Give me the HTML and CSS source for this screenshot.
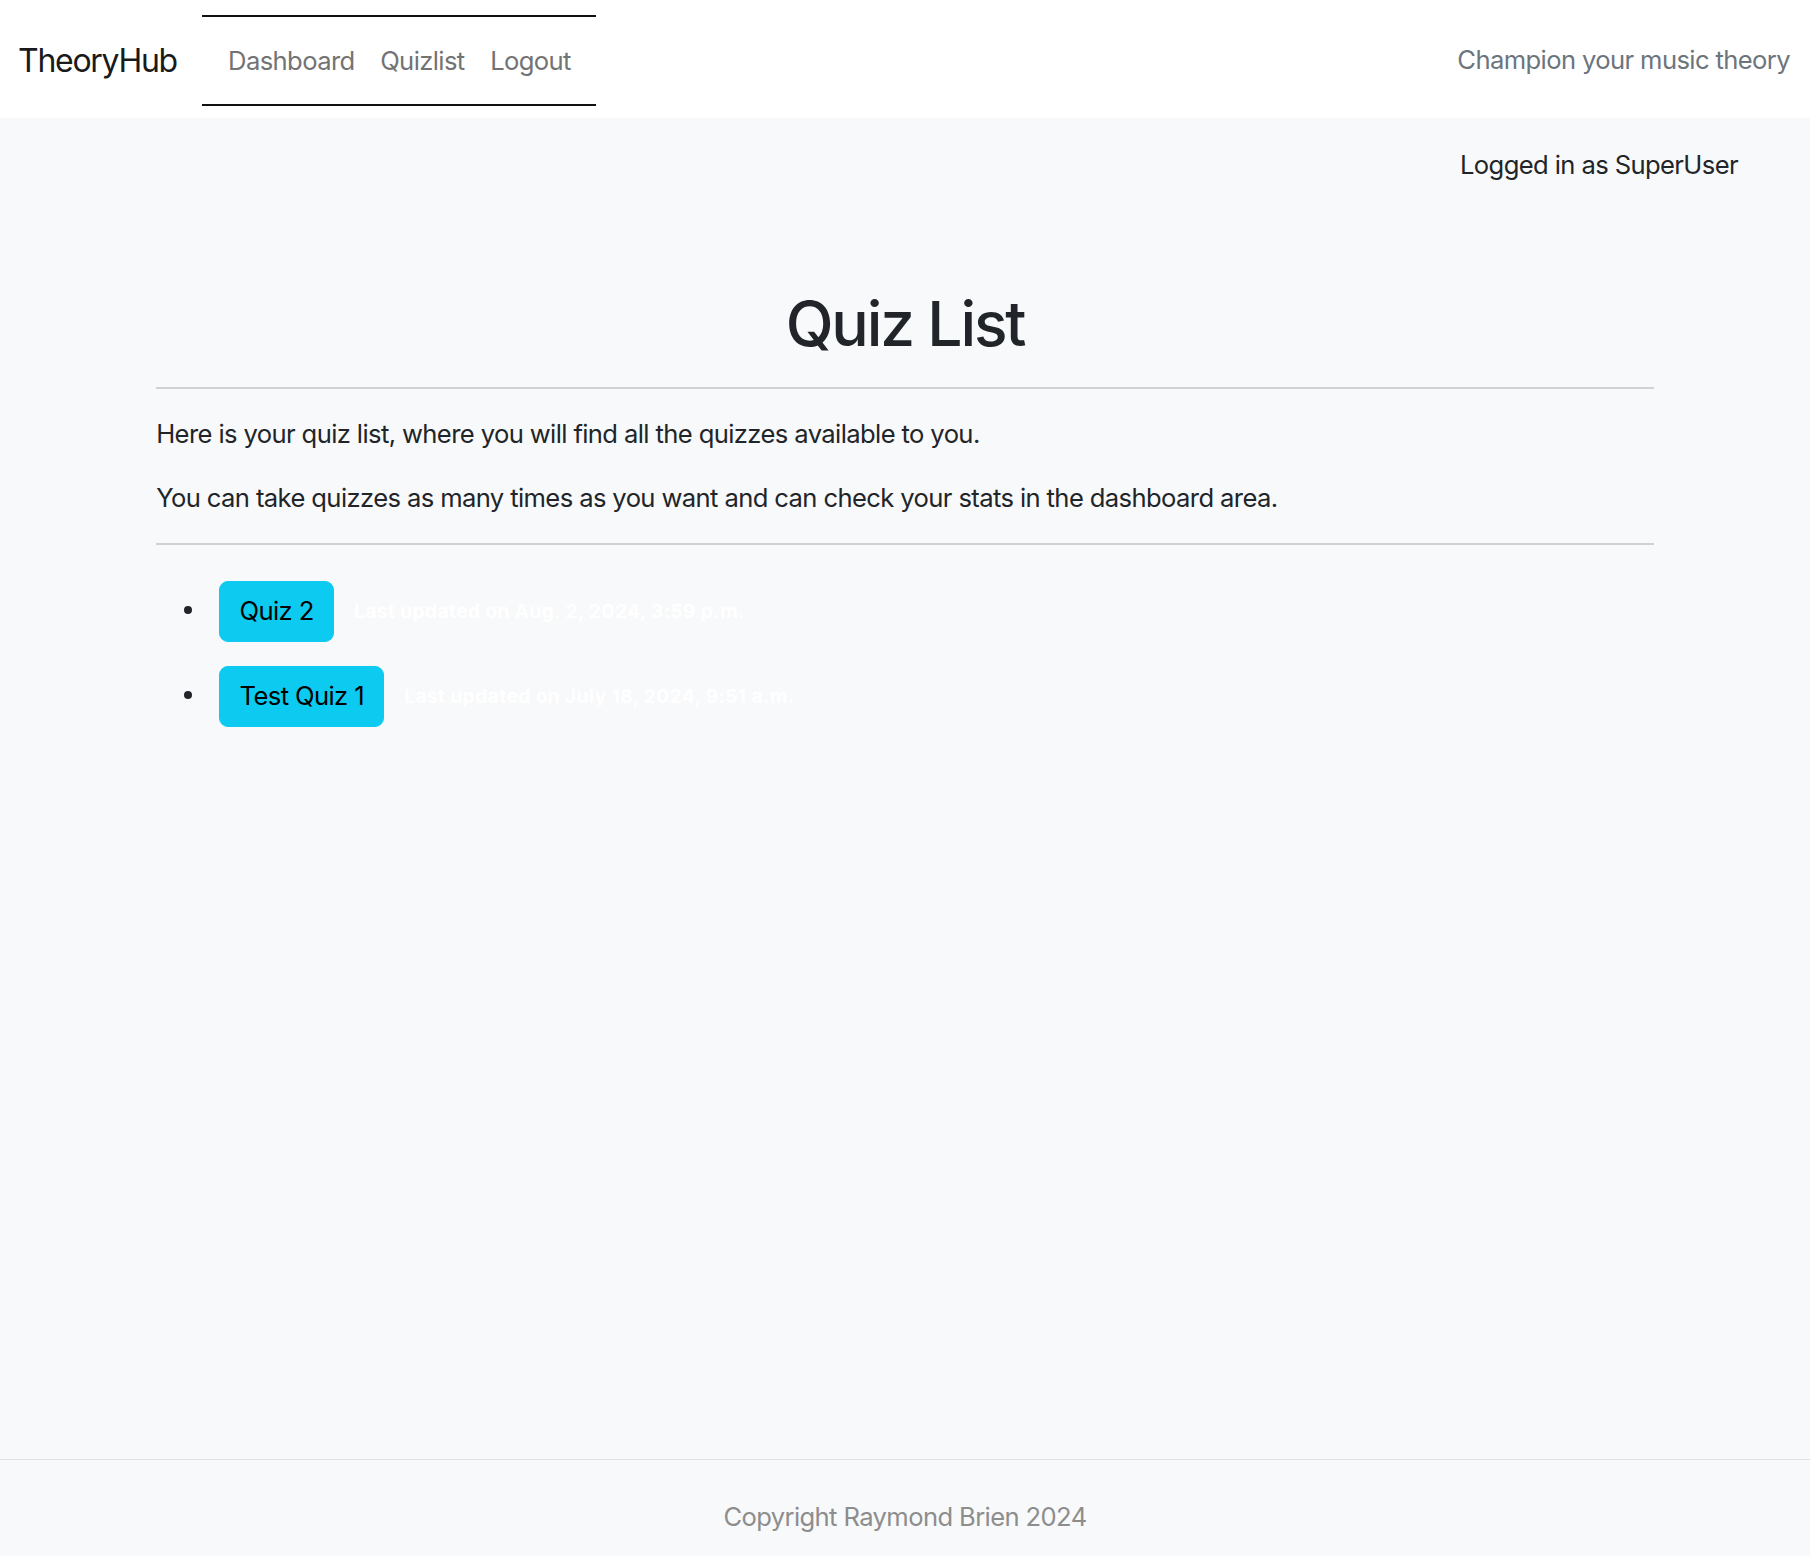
FILE: index.html
```html
<!DOCTYPE html>
<html lang="en">
<head>
<meta charset="utf-8">
<title>TheoryHub - Quiz List</title>
<link rel="stylesheet" href="styles.css">
</head>
<body>
<header class="navbar">
  <a class="brand" href="#">TheoryHub</a>
  <ul class="nav">
    <li><a class="nav-link" href="#">Dashboard</a></li>
    <li><a class="nav-link" href="#">Quizlist</a></li>
    <li><a class="nav-link" href="#">Logout</a></li>
  </ul>
  <span class="tagline">Champion your music theory</span>
</header>
<main class="main">
  <div class="userbar">Logged in as SuperUser</div>
  <div class="container">
    <h1 class="title">Quiz List</h1>
    <hr class="rule">
    <p class="text">Here is your quiz list, where you will find all the quizzes available to you.</p>
    <p class="text">You can take quizzes as many times as you want and can check your stats in the dashboard area.</p>
    <hr class="rule">
    <ul class="quiz-list">
      <li class="quiz-item"><a class="btn" href="#">Quiz 2</a><span class="updated">Last updated on Aug. 2, 2024, 3:59 p.m.</span></li>
      <li class="quiz-item"><a class="btn" href="#">Test Quiz 1</a><span class="updated">Last updated on July 18, 2024, 9:51 a.m.</span></li>
    </ul>
  </div>
</main>
<footer class="footer">Copyright Raymond Brien 2024</footer>
</body>
</html>
```
FILE: styles.css
```css
* { box-sizing: border-box; }

body {
  margin: 0;
  font-family: Inter, "Liberation Sans", sans-serif;
  font-size: 25.6px;
  line-height: 1.5;
  letter-spacing: -0.024em;
  color: #212529;
  background: #f8f9fa;
}

a { text-decoration: none; }

.navbar {
  display: flex;
  align-items: center;
  background: #fff;
  padding: 15px 20px 12px 18px;
}

.brand {
  font-size: 32px;
  line-height: 48px;
  letter-spacing: -0.04em;
  color: #1a1a1a;
  margin-right: 25.6px;
}

.nav {
  display: flex;
  list-style: none;
  margin: 0;
  padding: 12px 12.8px 11px;
  border-top: 2px solid #111;
  border-bottom: 2px solid #111;
}

.nav-link {
  display: block;
  padding: 12.8px;
  line-height: 38.4px;
  color: #737373;
}

.tagline {
  margin-left: auto;
  color: #6c757d;
}

.main {
  min-height: 1341px;
}

.userbar {
  text-align: right;
  padding: 27.5px 72px 0 0;
  line-height: 38.4px;
}

.container {
  max-width: 1536px;
  margin: 0 auto;
  padding: 0 19.2px;
}

.title {
  margin: 102.8px 0 12.8px;
  font-size: 62.35px;
  font-weight: 500;
  line-height: 1.2;
  letter-spacing: -0.035em;
  text-align: center;
}

.rule {
  margin: 25.6px 0;
  border: 0;
  border-top: 2px solid #d0d2d4;
}

.text {
  margin: 0 0 25.6px;
}

.quiz-list {
  margin: 0;
  padding-left: 51.2px;
}

.quiz-item {
  padding: 10.4px 0 13.6px;
}

.btn {
  display: inline-block;
  vertical-align: middle;
  margin-left: 12px;
  padding: 10.4px 19.2px;
  line-height: 38.4px;
  color: #000;
  background: #0dcaf0;
  border: 1px solid #0dcaf0;
  border-radius: 9px;
}

.updated {
  margin-left: 20px;
  font-size: 19.2px;
  font-weight: 700;
  letter-spacing: 0.02em;
  color: #fff;
}

.footer {
  border-top: 1px solid #dee2e6;
  padding: 38.4px 0;
  text-align: center;
  color: #8d8d8d;
  line-height: 38.4px;
}
```
